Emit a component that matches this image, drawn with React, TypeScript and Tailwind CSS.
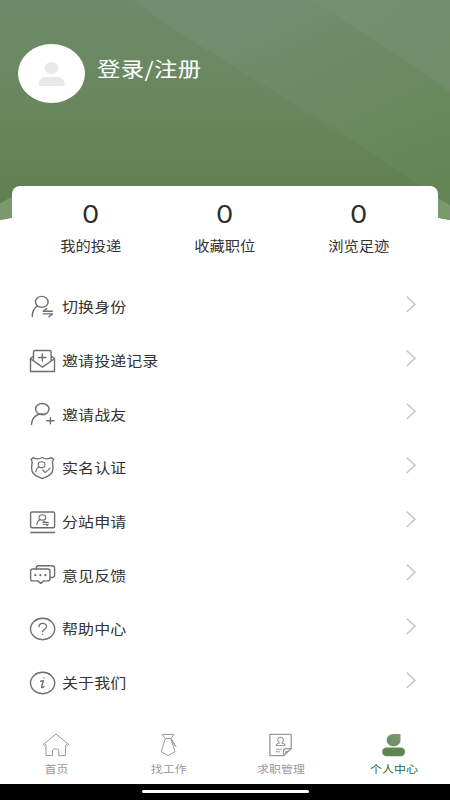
import React from 'react'

interface iconProps {
    children: React.ReactNode,
}

interface rowProps {
    text: string,
    icon: React.ReactNode,
}

interface tabProps {
    text: string,
    icon: React.ReactNode,
    active?: boolean,
}

const RowIcon: React.FC<iconProps> = ({ children }) => (
    <svg className="w-7 h-7 shrink-0 text-[#6e6e6e]" viewBox="0 0 28 28" fill="none" stroke="currentColor" strokeWidth="1.4" strokeLinecap="round" strokeLinejoin="round">
        {children}
    </svg>
)

const TabIcon: React.FC<iconProps> = ({ children }) => (
    <svg className="w-7 h-6 text-[#999999]" viewBox="0 0 28 24" fill="none" stroke="currentColor" strokeWidth="1" strokeLinejoin="round">
        {children}
    </svg>
)

const stats = [
    { label: '我的投递', value: 0 },
    { label: '收藏职位', value: 0 },
    { label: '浏览足迹', value: 0 },
]

const rows: rowProps[] = [
    {
        text: '切换身份',
        icon: (
            <RowIcon>
                <ellipse cx="13.8" cy="8.9" rx="6.3" ry="5.5" />
                <path d="M9.6 13.2C6.2 15 4.3 18.5 4.3 23.5M24.4 18.3h-9.2l3.6-2.8M15.2 20.9h9.2l-3.4 2.9" />
            </RowIcon>
        ),
    },
    {
        text: '邀请投递记录',
        icon: (
            <RowIcon>
                <path d="M5.5 13.2V5q0-1.5 1.5-1.5h14.6q1.5 0 1.5 1.5v8.2M5.500 9l-3 2.500v13h24v-13L23.100 9M2.500 11.700l12 8.400 12-8.400M14.300 7v7M10.600 10.500H18" />
            </RowIcon>
        ),
    },
    {
        text: '邀请战友',
        icon: (
            <RowIcon>
                <ellipse cx="14.3" cy="9.100" rx="6.700" ry="5.600" />
                <path d="M17 14.500C9 12.500 4 17.500 3.500 24.500M22.400 17.600v6.200M18.800 20.700H26" />
            </RowIcon>
        ),
    },
    {
        text: '实名认证',
        icon: (
            <RowIcon>
                <path d="M14.300 3.500c-2.800 1.700-6 1.800-8.800.1L3.100 5.300c1.100 1.500 1.300 3 .8 5-1 5 0 9.200 4.300 11.500l6.100 2.900 6.100-2.900c4.300-2.300 5.300-6.500 4.300-11.500-.5-2-.3-3.500.8-5l-2.400-1.700c-2.800 1.700-6 1.600-8.800-.1Z" />
                <g strokeWidth="1.100">
                    <ellipse cx="13.600" cy="10.700" rx="3.400" ry="2.900" />
                    <path d="M11.300 13c-2.100.8-3.400 2.700-3.400 5M14.700 16l2.500 2.600 5-4.500" />
                </g>
            </RowIcon>
        ),
    },
    {
        text: '分站申请',
        icon: (
            <RowIcon>
                <rect x="2.600" y="4" width="24" height="15.800" rx="1.500" />
                <path d="M2.300 24.500h24.600" strokeWidth="1.600" strokeLinecap="butt" />
                <g strokeWidth="1.100">
                    <ellipse cx="14.400" cy="9.400" rx="3.400" ry="2.700" />
                    <path d="M12 11.700c-2 .7-3 2.200-3.100 4.800M20.300 14.400h-5.400l1.800-1.200M15 16.300h5.300l-1.700 1.200" />
                </g>
            </RowIcon>
        ),
    },
    {
        text: '意见反馈',
        icon: (
            <RowIcon>
                <path d="M8.200 8V6.900q0-2.200 2.200-2.200h13.800q2.400 0 2.400 2.200v7.400q0 2-2.200 2.200h-2" />
                <path d="M4.600 8h15.200q2.200 0 2.200 2.200v7.500q0 2.200-2.200 2.200h-4l-3 2.500-3-2.500H4.600q-2 0-2-2.200v-7.500Q2.600 8 4.600 8Z" />
                <path d="M7.300 14.200h.1M12.300 14.200h.1M17.300 14.200h.1" strokeWidth="2.200" />
            </RowIcon>
        ),
    },
    {
        text: '帮助中心',
        icon: (
            <RowIcon>
                <ellipse cx="14.600" cy="14" rx="12.100" ry="10.700" />
                <path d="M11 11.800c.2-4.600 7.700-4.300 7.500-.1-.1 2.600-3.800 2.500-3.800 5M14.700 19.100v.2" strokeWidth="1.300" />
            </RowIcon>
        ),
    },
    {
        text: '关于我们',
        icon: (
            <RowIcon>
                <ellipse cx="14.600" cy="14" rx="12.100" ry="10.700" />
                <path d="M12.700 12.300l2.600-.5-1.700 6.100q-.3 1.700 2.400-.3M15.900 8.900v.1" strokeWidth="1.400" />
            </RowIcon>
        ),
    },
]

const tabs: tabProps[] = [
    {
        text: '首页',
        icon: (
            <TabIcon>
                <path d="M4 12v10.600h6.500v-4.700q0-2 2-2h2.300q2 0 2 2v4.700h6.800V12M1.300 11.400 14 1.100l12.800 10.300-1 .9-2.200-1.500M1.300 11.400l.9 1L4 11" />
            </TabIcon>
        ),
    },
    {
        text: '找工作',
        icon: (
            <TabIcon>
                <path d="M7.100 1.400h11.900l-3.200 4.200 4.200 13.200-6.800 3.700-7-3.700 4.200-13.200ZM10.400 5.600h5.400M15.600 5.200l5.600 8.600M17 7l3.200 6.300" />
            </TabIcon>
        ),
    },
    {
        text: '求职管理',
        icon: (
            <TabIcon>
                <path d="M16.500 22.700H2.900V1.400h21.300v13.900" strokeWidth="1.300" />
                <path d="M12 9c-2.200-1.700-1.500-4.600 1.600-4.600s3.800 2.900 1.600 4.600v1.200c1.700.2 2.800.8 2.800 2.300H9.200c0-1.500 1.100-2.100 2.800-2.300ZM8.800 16.200h6M8.800 18.800h4.200" strokeWidth="1.100" />
                <path d="M16.500 22.700v-4.500q0-2.500 2.700-2.500h5Z" strokeWidth="1.200" />
                <path d="M18.300 21v-3.300h4.200Z" fill="currentColor" stroke="none" />
            </TabIcon>
        ),
    },
    {
        text: '个人中心',
        active: true,
        icon: (
            <svg className="w-7 h-6" viewBox="0 0 28 24">
                <defs>
                    <linearGradient id="leaf" x1="0" y1="1" x2="1" y2="0">
                        <stop offset="0" stopColor="#688a5c" />
                        <stop offset="1" stopColor="#7c9c72" />
                    </linearGradient>
                </defs>
                <path d="M20.500 1.100v6.200c0 3.400-3 6-6.900 6s-6.900-2.600-6.900-6 3-6.200 6.900-6.200Z" fill="url(#leaf)" />
                <rect x="2.200" y="14.600" width="22.800" height="8.600" rx="4.200" fill="#628355" />
            </svg>
        ),
    },
]

const HeaderBackground: React.FC = () => (
    <svg className="absolute inset-0 w-full h-full" viewBox="0 0 450 222" preserveAspectRatio="none">
        <defs>
            <linearGradient id="base" x1="0" y1="0" x2="0" y2="1">
                <stop offset="0" stopColor="#6e8b69" />
                <stop offset="0.5" stopColor="#68875d" />
                <stop offset="0.85" stopColor="#608152" />
                <stop offset="1" stopColor="#5e7f50" />
            </linearGradient>
            <linearGradient id="band" gradientUnits="userSpaceOnUse" x1="270" y1="0" x2="370" y2="215">
                <stop offset="0" stopColor="#728e70" />
                <stop offset="0.5" stopColor="#6b8a62" />
                <stop offset="1" stopColor="#648657" />
            </linearGradient>
            <linearGradient id="corner" gradientUnits="userSpaceOnUse" x1="370" y1="0" x2="440" y2="95">
                <stop offset="0" stopColor="#728f6e" />
                <stop offset="1" stopColor="#6f8e69" />
            </linearGradient>
        </defs>
        <path d="M0 0h450v220Q225 176 0 220Z" fill="url(#base)" />
        <path d="M133 0 Q180 34 225 61 L350 139 L438 197 L450 205 V0Z" fill="url(#band)" />
        <path d="M312 0 Q360 31 400 57 L450 92 V0Z" fill="url(#corner)" />
        <path d="M0 203.500 30 186v28.500L0 220Z M450 205 420 187v27.500l30 5.500Z" fill="#7b986f" />
    </svg>
)

const MenuRow: React.FC<rowProps> = ({ text, icon }) => (
    <div className="flex h-[53.7px] items-center pl-7 pr-[33px]">
        {icon}
        <p className="-mt-px ml-1.5 flex-1 origin-left scale-x-[1.14] whitespace-nowrap text-sm tracking-[0.1px] text-[#333333]">{text}</p>
        <svg className="w-3 h-5 -mt-1.5" viewBox="0 0 12 20" fill="none" stroke="#c9c9c9" strokeWidth="1.600">
            <path d="M1.700 2.600 10 10.200 1.700 18" />
        </svg>
    </div>
)

const TabItem: React.FC<tabProps> = ({ text, icon, active }) => (
    <div className="flex flex-1 flex-col items-center">
        {icon}
        <p className={active ? 'mt-1 scale-x-[1.14] text-[10.5px] leading-4 text-[#26702b]' : 'mt-1 scale-x-[1.14] text-[10.5px] leading-4 text-[#999999]'}>{text}</p>
    </div>
)

const App: React.FC = () => {
    return (
        <div className="flex h-[800px] w-[450px] flex-col overflow-hidden bg-white font-['Noto_Sans_CJK_SC',sans-serif]">
            <div className="relative h-[222px] shrink-0">
                <HeaderBackground />
                <div className="relative flex h-[186px] items-start pl-[18px] pt-11">
                    <div className="flex h-[59px] w-[67px] items-center justify-center rounded-[50%] bg-white">
                        <svg className="w-7 h-6" viewBox="0 0 28 24" fill="#e8e8e8">
                            <ellipse cx="13.500" cy="6" rx="6.900" ry="6" />
                            <path d="M.3 24c0-6 3.500-9 8-9h10.500c4.500 0 8 3 8 9Z" />
                        </svg>
                    </div>
                    <p className="ml-3 mt-2 origin-left scale-x-[1.14] text-[20.5px] leading-8 tracking-[0.3px] text-white">登录/注册</p>
                </div>
                <div className="relative mx-3 flex h-20 rounded-t-lg bg-white px-3">
                    {stats.map((stat) => (
                        <div className="flex flex-1 flex-col items-center pt-[15px]" key={stat.label}>
                            <p className="scale-x-[1.14] font-['Inter',sans-serif] text-2xl leading-7 text-[#2b2b2b]">{stat.value}</p>
                            <p className="mt-1.5 scale-x-[1.14] text-[13.4px] leading-5 text-[#333333]">{stat.label}</p>
                        </div>
                    ))}
                </div>
            </div>
            <div className="flex-1 pt-[58px]">
                {rows.map((row) => (
                    <MenuRow key={row.text} text={row.text} icon={row.icon} />
                ))}
            </div>
            <div className="flex h-[51px] shrink-0">
                {tabs.map((tab) => (
                    <TabItem key={tab.text} text={tab.text} icon={tab.icon} active={tab.active} />
                ))}
            </div>
            <div className="flex h-4 shrink-0 justify-center bg-black pt-1.5">
                <div className="h-[3px] w-[167px] rounded-full bg-white" />
            </div>
        </div>
    )
}

export default App
